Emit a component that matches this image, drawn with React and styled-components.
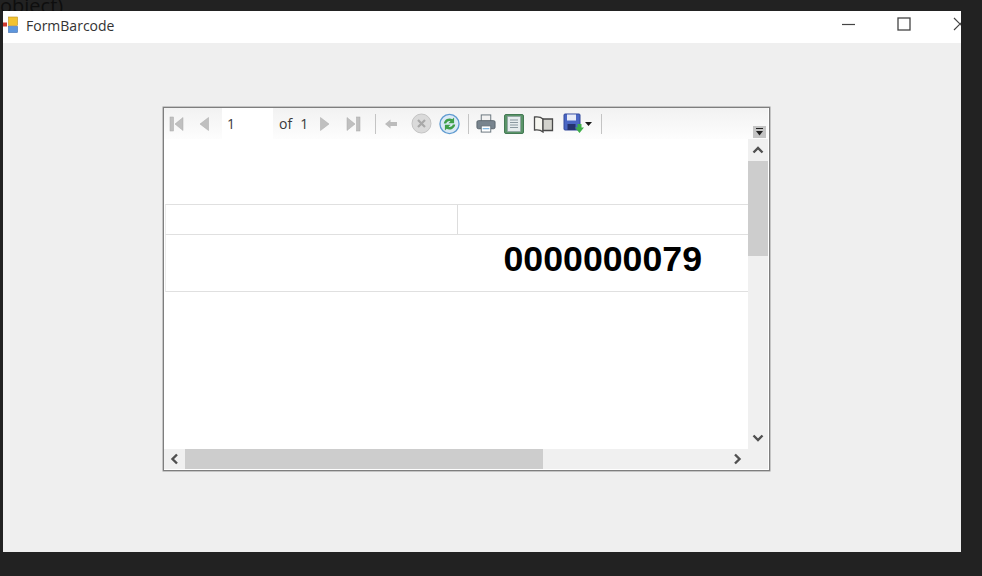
import React from 'react';
import styled, { createGlobalStyle } from 'styled-components';

const GlobalStyle = createGlobalStyle`
  html, body {
    margin: 0;
    height: 100%;
    background: #222222;
    overflow: hidden;
  }
`;

const Desktop = styled.div`
  width: 982px;
  height: 576px;
  overflow: hidden;
  background: #222222;
  font-family: "Open Sans", "Liberation Sans", sans-serif;
`;

const BehindText = styled.div`
  height: 11px;
  overflow: hidden;
  color: #0e0e0e;
  font-size: 20px;
  line-height: 11px;
  white-space: nowrap;
`;

const Window = styled.div`
  width: 958px;
  height: 541px;
  margin-left: 3px;
  background: #efefef;
  overflow: hidden;
`;

const TitleBar = styled.div`
  height: 28px;
  padding-bottom: 4px;
  background: #ffffff;
  display: flex;
  align-items: center;
`;

const TitleIcon = styled.svg`
  width: 19px;
  height: 19px;
  margin-left: -3px;
  flex: none;
`;

const TitleText = styled.span`
  margin-left: 7px;
  font-size: 14px;
  color: #333333;
  flex: 1;
`;

const ButtonRow = styled.div`
  display: flex;
  margin: 0 -27px 2px 0;
`;

const WindowButton = styled.div`
  width: 56px;
  height: 28px;
  flex: none;
  display: flex;
  align-items: center;
  justify-content: center;
`;

const Viewer = styled.div`
  width: 605px;
  height: 362px;
  margin: 64px 0 0 160px;
  border: 1px solid #7e7e7e;
  background: #ffffff;
  display: grid;
  grid-template-columns: 584px 20px;
  grid-template-rows: 31px 310px 20px;
  box-shadow: 0 0 0 0.5px #9a9a9a;
`;

const Toolbar = styled.div`
  grid-column: 1 / 3;
  display: flex;
  align-items: stretch;
  background: linear-gradient(#f2f2f2, #fdfdfd);
  position: relative;
  color: #3a3a3a;
  font-size: 14px;
`;

const ToolSlot = styled.div`
  width: ${p => p.$w}px;
  flex: none;
  display: flex;
  align-items: center;
  justify-content: center;
`;

const PageInput = styled.div`
  width: 51px;
  flex: none;
  background: #ffffff;
  display: flex;
  align-items: center;
  padding-left: 5px;
  box-sizing: border-box;
`;

const PageCount = styled.div`
  width: 42px;
  flex: none;
  padding-left: 6px;
  box-sizing: border-box;
  display: flex;
  align-items: center;
  gap: 8px;
`;

const Separator = styled.div`
  width: 1px;
  height: 20px;
  background: #c4c4c4;
`;

const Overflow = styled.div`
  position: absolute;
  right: 2px;
  bottom: 1px;
  width: 13px;
  height: 12px;
  background: #c4c4c4;
  display: flex;
  align-items: center;
  justify-content: center;
`;

const Report = styled.div`
  padding: 65px 0 0 1px;
  background: #ffffff;
`;

const ReportRow = styled.div`
  display: grid;
  grid-template-columns: ${p => p.$columns};
  height: ${p => p.$h}px;
  border-top: 1.5px solid #e0e0e0;
  border-left: 1px solid #ececec;
  border-bottom: ${p => (p.$last ? '1.5px solid #e0e0e0' : 'none')};
`;

const ReportCell = styled.div`
  border-right: ${p => (p.$divider ? '1px solid #dddddd' : 'none')};
`;

const BarcodeNumber = styled.div`
  font-family: "Liberation Sans", Arial, sans-serif;
  font-weight: 700;
  font-size: 35.7px;
  color: #000000;
  text-align: right;
  padding-right: 46px;
  line-height: 49px;
`;

const ScrollTrack = styled.div`
  background: #f0f0f0;
  display: flex;
  flex-direction: ${p => (p.$horizontal ? 'row' : 'column')};
  align-items: center;
`;

const ScrollArrow = styled.div`
  width: ${p => (p.$horizontal ? 21 : 20)}px;
  height: ${p => (p.$horizontal ? 20 : 22)}px;
  flex: none;
  display: flex;
  align-items: center;
  justify-content: center;
`;

const ScrollThumb = styled.div`
  background: #cdcdcd;
  flex: none;
  width: ${p => (p.$horizontal ? `${p.$size}px` : '100%')};
  height: ${p => (p.$horizontal ? '100%' : `${p.$size}px`)};
`;

const ScrollGap = styled.div`
  flex: 1;
`;

const Corner = styled.div`
  background: #f0f0f0;
`;

const Chevron = ({ d }) => (
  <svg width="12" height="12" viewBox="0 0 12 12">
    <path d={d} fill="none" stroke="#505050" strokeWidth="2.4" />
  </svg>
);

const FirstIcon = ({ flip }) => (
  <svg width="16" height="16" viewBox="0 0 16 16" style={flip ? { transform: 'scaleX(-1)' } : undefined}>
    <rect x="1" y="1" width="3.5" height="14" fill="#c0c0c0" stroke="#a8a8a8" strokeWidth="0.5" />
    <path d="M14 1.5v13L6 8z" fill="#c0c0c0" stroke="#a8a8a8" strokeWidth="0.5" />
  </svg>
);

const PrevIcon = ({ flip }) => (
  <svg width="12" height="16" viewBox="0 0 12 16" style={flip ? { transform: 'scaleX(-1)' } : undefined}>
    <path d="M10.5 1.5v13L2 8z" fill="#c0c0c0" stroke="#a8a8a8" strokeWidth="0.5" />
  </svg>
);

const BackIcon = () => (
  <svg width="14" height="12" viewBox="0 0 14 12">
    <path d="M1 6l5.5-4.500V4H13v4H6.500v2.500z" fill="#bcbcbc" />
  </svg>
);

const StopIcon = () => (
  <svg width="21" height="21" viewBox="0 0 21 21">
    <circle cx="10.5" cy="10.5" r="9.500" fill="#dadada" stroke="#c4c4c4" />
    <path d="M7 7l7 7M14 7l-7 7" stroke="#a8a8a8" strokeWidth="2.200" />
  </svg>
);

const RefreshIcon = () => (
  <svg width="22" height="22" viewBox="0 0 22 22">
    <circle cx="11" cy="11" r="10" fill="#dbe9f6" stroke="#5f9bd0" strokeWidth="1.400" />
    <path d="M5 10.500a6 6 0 0 1 9-4.500l1.800-1.800v6h-6l2.200-2.200A3.500 3.500 0 0 0 7.500 10.500z" fill="#3f9f48" />
    <path d="M17 11.500a6 6 0 0 1-9 4.500l-1.800 1.800v-6h6L10 14a3.500 3.500 0 0 0 4.500-2.500z" fill="#3f9f48" />
  </svg>
);

const PrintIcon = () => (
  <svg width="21" height="21" viewBox="0 0 21 21">
    <rect x="5.500" y="1.500" width="10" height="7" fill="#f1f1f1" stroke="#66727b" />
    <rect x="1" y="7.500" width="19" height="8.500" rx="1.500" fill="#78848e" stroke="#59646c" />
    <rect x="5.500" y="13" width="10" height="6.500" fill="#ffffff" stroke="#66727b" />
    <rect x="7" y="15.500" width="7" height="1" fill="#5aa0d8" />
  </svg>
);

const PageIcon = () => (
  <svg width="20" height="20" viewBox="0 0 20 20">
    <rect x="0.500" y="0.500" width="19" height="19" rx="1.500" fill="#5a9468" stroke="#447a54" />
    <rect x="3.500" y="2.500" width="13" height="15" fill="#e6ecee" stroke="#8a9aa0" strokeWidth="0.600" />
    <path d="M6 6h8M6 8.500h8M6 11h8M6 13.500h8" stroke="#8a98a0" />
  </svg>
);

const BookIcon = () => (
  <svg width="21" height="18" viewBox="0 0 21 18">
    <path d="M10 4C8 2 5 1.500 1.500 2v13c3.500-.5 6.500 0 8.500 2z" fill="#f6f6f0" stroke="#4a4a4a" strokeWidth="1.300" />
    <path d="M10 4h9.500v11.500H10z" fill="#d2d2cc" stroke="#4a4a4a" strokeWidth="1.300" />
  </svg>
);

const SaveIcon = () => (
  <svg width="22" height="21" viewBox="0 0 22 21">
    <rect x="1" y="1" width="16" height="16" rx="1" fill="#4a66c4" stroke="#33489a" />
    <rect x="4" y="1.500" width="9" height="6" fill="#e7ebf7" />
    <rect x="4.500" y="11" width="8" height="6" fill="#25336f" />
    <path d="M14.500 11h4v3.500h2.500L16.500 20l-4.500-5.500h2.500z" fill="#3fae4a" />
  </svg>
);

const Caret = () => (
  <svg width="7" height="4" viewBox="0 0 7 4">
    <path d="M0 0h7L3.500 4z" fill="#1a1a1a" />
  </svg>
);

const App = () => (
  <Desktop>
    <GlobalStyle />
    <BehindText>object)</BehindText>
    <Window>
      <TitleBar>
        <TitleIcon viewBox="0 0 19 19">
          <rect x="8.500" y="1" width="9" height="8.500" fill="#f2c230" stroke="#b98f20" strokeWidth="0.600" />
          <rect x="8.500" y="10.500" width="9" height="6" fill="#5d96dc" stroke="#3f6db0" strokeWidth="0.600" />
          <rect x="2" y="6.500" width="5" height="4" fill="#cf3a30" />
        </TitleIcon>
        <TitleText>FormBarcode</TitleText>
        <ButtonRow>
          <WindowButton>
            <svg width="13" height="13" viewBox="0 0 13 13"><path d="M0 6.500h13" stroke="#444" strokeWidth="1.200" /></svg>
          </WindowButton>
          <WindowButton>
            <svg width="14" height="14" viewBox="0 0 14 14"><rect x="1" y="1" width="12" height="12" fill="none" stroke="#444" strokeWidth="1.300" /></svg>
          </WindowButton>
          <WindowButton>
            <svg width="14" height="14" viewBox="0 0 14 14"><path d="M1 1l12 12M13 1L1 13" stroke="#444" strokeWidth="1.200" /></svg>
          </WindowButton>
        </ButtonRow>
      </TitleBar>
      <Viewer>
        <Toolbar>
          <ToolSlot $w={25}><FirstIcon /></ToolSlot>
          <ToolSlot $w={30}><PrevIcon /></ToolSlot>
          <ToolSlot $w={3} />
          <PageInput>1</PageInput>
          <PageCount><span>of</span><span>1</span></PageCount>
          <ToolSlot $w={20}><PrevIcon flip /></ToolSlot>
          <ToolSlot $w={36}><FirstIcon flip /></ToolSlot>
          <ToolSlot $w={8}><Separator /></ToolSlot>
          <ToolSlot $w={24}><BackIcon /></ToolSlot>
          <ToolSlot $w={36}><StopIcon /></ToolSlot>
          <ToolSlot $w={21}><RefreshIcon /></ToolSlot>
          <ToolSlot $w={16}><Separator /></ToolSlot>
          <ToolSlot $w={20}><PrintIcon /></ToolSlot>
          <ToolSlot $w={36}><PageIcon /></ToolSlot>
          <ToolSlot $w={22}><BookIcon /></ToolSlot>
          <ToolSlot $w={8} />
          <ToolSlot $w={30}><SaveIcon /><Caret /></ToolSlot>
          <ToolSlot $w={18}><Separator /></ToolSlot>
          <Overflow>
            <svg width="7" height="8" viewBox="0 0 7 8">
              <path d="M0 .5h7" stroke="#222" />
              <path d="M0 3h7L3.500 7.500z" fill="#222" />
            </svg>
          </Overflow>
        </Toolbar>
        <Report>
          <ReportRow $columns="292px 1fr" $h={29}>
            <ReportCell $divider />
            <ReportCell />
          </ReportRow>
          <ReportRow $columns="1fr" $h={56} $last>
            <BarcodeNumber>0000000079</BarcodeNumber>
          </ReportRow>
        </Report>
        <ScrollTrack>
          <ScrollArrow><Chevron d="M1.500 8.500L6 4l4.500 4.500" /></ScrollArrow>
          <ScrollThumb $size={95} />
          <ScrollGap />
          <ScrollArrow><Chevron d="M1.500 3.500L6 8l4.500-4.500" /></ScrollArrow>
        </ScrollTrack>
        <ScrollTrack $horizontal>
          <ScrollArrow $horizontal><Chevron d="M8 1.500L3.500 6 8 10.500" /></ScrollArrow>
          <ScrollThumb $horizontal $size={358} />
          <ScrollGap />
          <ScrollArrow $horizontal><Chevron d="M3 1.500L7.500 6 3 10.500" /></ScrollArrow>
        </ScrollTrack>
        <Corner />
      </Viewer>
    </Window>
  </Desktop>
);

export default App;
